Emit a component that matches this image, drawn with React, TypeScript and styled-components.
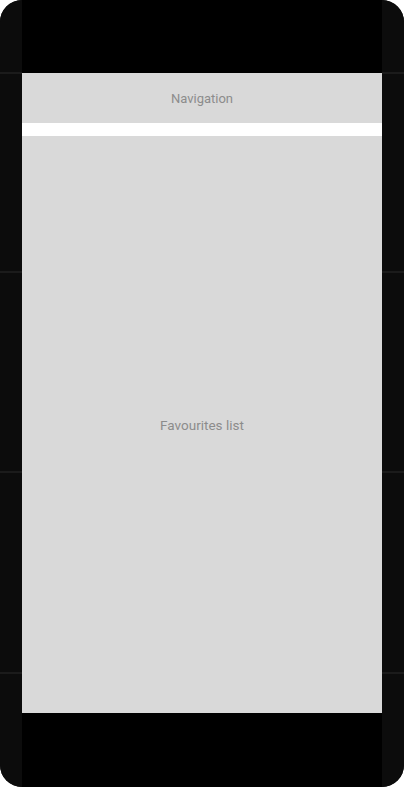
import * as React from "react";
import styled, { createGlobalStyle } from "styled-components";

const GlobalStyle = createGlobalStyle`
  html, body {
    margin: 0;
    padding: 0;
    background: #fff;
  }
  body {
    font-family: Roboto, "Liberation Sans", sans-serif;
  }
`;

const Frame = styled.div`
  width: 404px;
  height: 787px;
  display: flex;
  border-radius: 22px;
  overflow: hidden;
  background: #0c0c0c;
`;

// dark bezel strips with the faint guide lines
const Side = styled.div`
  width: 22px;
  flex-shrink: 0;
  background-color: #0c0c0c;
  background-image: linear-gradient(#1b1b1b, #1b1b1b),
    linear-gradient(#1b1b1b, #1b1b1b), linear-gradient(#1b1b1b, #1b1b1b),
    linear-gradient(#1b1b1b, #1b1b1b);
  background-repeat: no-repeat;
  background-size: 100% 2px;
  background-position: 0 72px, 0 271px, 0 471px, 0 672px;
`;

const Screen = styled.div`
  flex: 1;
  display: flex;
  flex-direction: column;
  background: #000;
`;

const Spacer = styled.div<{ $h: number; $bg?: string }>`
  height: ${(p) => p.$h}px;
  flex-shrink: 0;
  background: ${(p) => p.$bg ?? "#000"};
`;

const Block = styled.div<{ $h?: number; $size?: number }>`
  ${(p) => (p.$h ? `height: ${p.$h}px; flex-shrink: 0;` : "flex: 1;")}
  background: #d9d9d9;
  display: flex;
  align-items: center;
  justify-content: center;
  color: #8c8c8c;
  font-size: ${(p) => p.$size ?? 13}px;
`;

const App: React.FC = () => (
  <>
    <GlobalStyle />
    <Frame>
      <Side />
      <Screen>
        <Spacer $h={73} />
        <Block $h={50}>Navigation</Block>
        <Spacer $h={13} $bg="#fff" />
        <Block $size={13.5}>Favourites list</Block>
        <Spacer $h={74} />
      </Screen>
      <Side />
    </Frame>
  </>
);

export default App;
